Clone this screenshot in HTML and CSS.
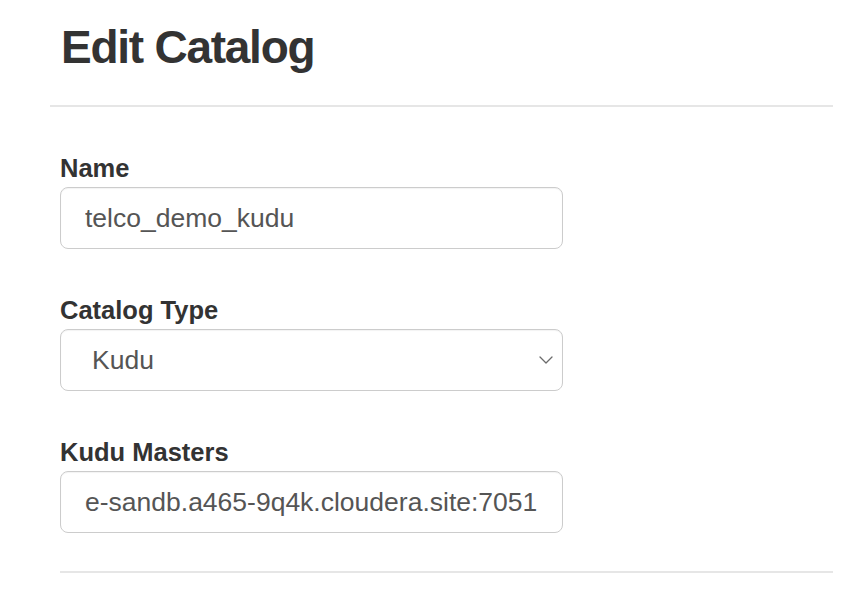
FILE: index.html
```html
<!DOCTYPE html>
<html lang="en">
<head>
<meta charset="utf-8">
<title>Edit Catalog</title>
<link rel="stylesheet" href="styles.css">
</head>
<body>
<div class="page">
  <header class="page-header">
    <h1 class="title">Edit Catalog</h1>
  </header>
  <form class="form">
    <div class="group">
      <label class="label" for="name">Name</label>
      <input class="control" id="name" type="text" value="telco_demo_kudu">
    </div>
    <div class="group">
      <label class="label" for="type">Catalog Type</label>
      <div class="select-wrap">
        <select class="control select" id="type">
          <option>Kudu</option>
        </select>
        <svg class="chevron" width="14" height="8" viewBox="0 0 14 8" aria-hidden="true">
          <path d="M1 1 L7 7 L13 1" fill="none" stroke="#6b6b6b" stroke-width="1.3" stroke-linecap="round" stroke-linejoin="round"/>
        </svg>
      </div>
    </div>
    <div class="group group-last">
      <label class="label" for="masters">Kudu Masters</label>
      <input class="control" id="masters" type="text" value="e-sandb.a465-9q4k.cloudera.site:7051">
    </div>
    <div class="footer"></div>
  </form>
</div>
</body>
</html>
```

FILE: styles.css
```css
html, body {
  margin: 0;
  padding: 0;
  background: #ffffff;
}

body {
  font-family: "Liberation Sans", Arial, Helvetica, sans-serif;
  color: #333333;
}

.page {
  padding-left: 50px;
  width: 783px;
}

.page-header {
  padding-top: 22px;
  padding-bottom: 33px;
  border-bottom: 2px solid #e6e6e6;
}

.title {
  margin: 0;
  padding-left: 11px;
  font-size: 46px;
  line-height: 50px;
  font-weight: 700;
  letter-spacing: -1.25px;
  color: #333333;
}

.form {
  padding-top: 46px;
  padding-left: 10px;
}

.group {
  display: flex;
  flex-direction: column;
  margin-bottom: 46px;
}

.group-last {
  margin-bottom: 38px;
}

.label {
  display: block;
  font-size: 25.5px;
  line-height: 30px;
  font-weight: 700;
  color: #333333;
  margin-bottom: 4px;
}

.control {
  box-sizing: border-box;
  width: 503px;
  height: 62px;
  margin: 0;
  padding: 0 16px 0 24px;
  border: 1px solid #cccccc;
  border-radius: 8px;
  background: #ffffff;
  box-shadow: inset 0 1px 1px rgba(0, 0, 0, 0.05);
  font-family: "Liberation Sans", Arial, Helvetica, sans-serif;
  font-size: 26.5px;
  color: #555555;
  outline: none;
}

.select-wrap {
  position: relative;
  width: 503px;
}

.select {
  appearance: none;
  -webkit-appearance: none;
  padding-left: 31px;
}

.chevron {
  position: absolute;
  right: 10px;
  top: 27px;
  pointer-events: none;
}

.footer {
  border-top: 2px solid #e6e6e6;
}
```
